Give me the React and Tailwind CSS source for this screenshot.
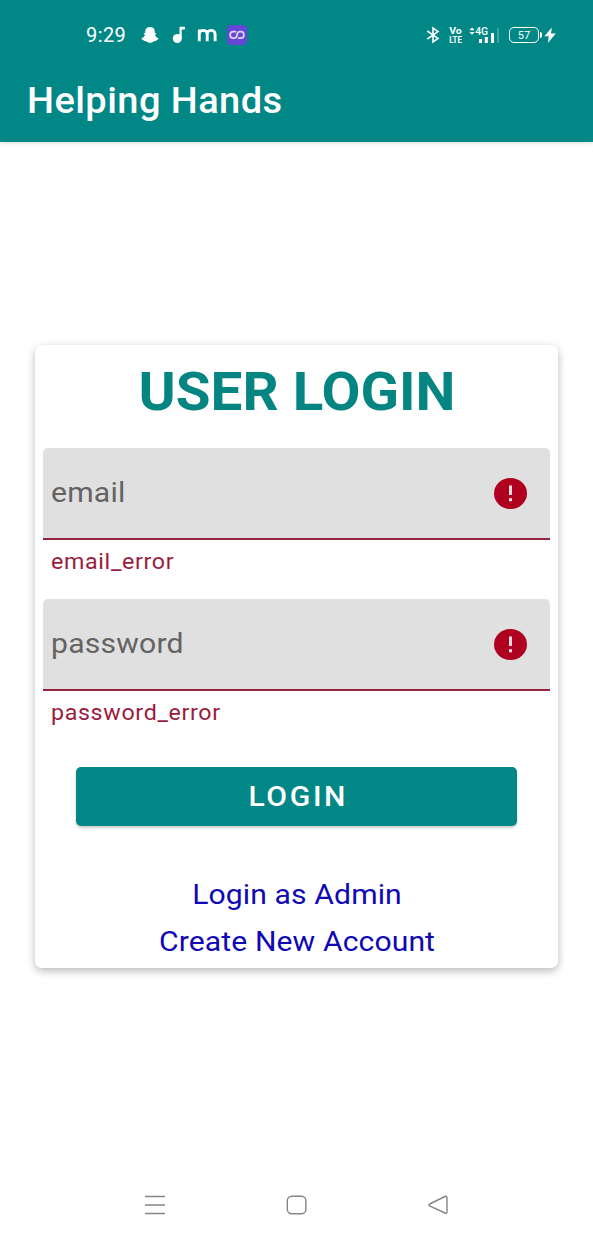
import React from "react";

function StatusIconsLeft() {
  return (
    <div className="flex items-center">
      <svg className="ml-[15px] h-[18px] w-[18px]" viewBox="0 0 18 18" fill="#fff">
        <path d="M9 1C6.100 1 4.200 2.800 4.200 5.200V7.200C3.400 7 2.900 7 2.800 7.500C2.700 8 3.300 8.500 4 8.800C3.500 10.400 2.200 11.800 .5 12.500C0 12.900 .9 13.700 2.500 13.900L2.900 15.100C4 15 5 15.100 6 15.700C7 16.400 7.800 16.900 9 16.900S11 16.400 12 15.700C13 15.100 14 15 15.100 15.100L15.500 13.900C17.100 13.700 18 12.900 17.500 12.500C15.800 11.800 14.500 10.400 14 8.800C14.700 8.500 15.300 8 15.200 7.500C15.100 7 14.600 7 13.800 7.200V5.200C13.800 2.800 11.900 1 9 1Z" />
      </svg>
      <svg className="ml-[13px] h-[18px] w-[14px]" viewBox="0 0 14 18" fill="#fff">
        <circle cx="5.300" cy="12.500" r="4.500" />
        <path d="M7.500 .8H12.900V3.500H9.700V13H7.500Z" />
      </svg>
      <svg className="ml-[11px] h-[18px] w-[20px]" viewBox="0 0 20 18" fill="none" stroke="#fff" strokeWidth="2.900">
        <path d="M2.300 15.300V3.500M2.300 8A3.960 3.900 0 0 1 10.200 8V15.300M10.200 8A3.960 3.900 0 0 1 18.100 8V15.300" />
      </svg>
      <svg className="ml-[10px] h-[20px] w-[20px]" viewBox="0 0 20 20">
        <rect width="20" height="20" rx="4.500" fill="#6447d5" />
        <path d="M8.500 6.700H6.300A3.200 3.200 0 0 0 6.300 13.100H7.500C9.500 13.100 9.700 11.300 10 10S10.600 6.700 12.500 6.700H13.700A3.200 3.200 0 0 1 13.700 13.100H11.500" fill="none" stroke="#e3d5ff" strokeWidth="1.700" strokeLinecap="round" />
      </svg>
    </div>
  );
}

function StatusIconsRight() {
  return (
    <div className="flex items-center">
      <svg className="h-[18px] w-[14px]" viewBox="0 0 14 18" fill="none" stroke="#fff" strokeWidth="1.600">
        <path d="M1.300 5L12 12.400L7 16V2L12 5.600L1.300 13" />
      </svg>
      <svg className="ml-[9px] h-[20px] w-[13px] overflow-visible" viewBox="0 0 13 20" fill="#fff" fontFamily="Roboto, sans-serif" fontWeight="700" fontSize="9.800">
        <text x=".2" y="9.200" textLength="12.600" lengthAdjust="spacingAndGlyphs">Vo</text>
        <text x=".2" y="17.600" textLength="12.600" lengthAdjust="spacingAndGlyphs">LTE</text>
      </svg>
      <svg className="ml-[7px] h-[20px] w-[30px]" viewBox="0 0 30 20" fill="#fff">
        <path d="M.3 5.300L3 2.500L5.700 5.300ZM.3 7L3 9.800L5.700 7Z" />
        <text x="6.200" y="10" fontSize="10.500" fontFamily="Roboto, sans-serif" fontWeight="500" textLength="13" lengthAdjust="spacingAndGlyphs">4G</text>
        <rect x="10" y="14" width="3" height="4" />
        <rect x="15.800" y="12" width="3" height="6" />
        <rect x="22" y="8" width="3" height="10" />
        <rect x="28.200" y="3" width="1.600" height="15" opacity=".3" />
      </svg>
      <div className="ml-[10px] flex h-[16px] w-[30px] items-center justify-center rounded-[5px] border-[1.5px] border-white text-[11px] leading-none">
        57
      </div>
      <div className="ml-px h-[6px] w-[2px] rounded-r bg-white" />
      <svg className="ml-[2px] h-[18px] w-[12px]" viewBox="0 0 12 18" fill="#fff">
        <path d="M7.800 1.500L.4 10.200H4.800L3.800 17L11.800 7.500H7Z" />
      </svg>
    </div>
  );
}

function Field({ label, error }) {
  return (
    <div className="h-[151px]">
      <div className="flex h-[92px] items-center justify-between rounded-t-[5px] border-b-2 border-[#97243f] bg-[#e0e0e0] pr-[23px] pl-[8px]">
        <span className="origin-left scale-x-[1.057] text-[28.5px] leading-none tracking-[0.2px] text-[#636363]">{label}</span>
        <svg className="h-[31px] w-[33px]" viewBox="0 0 33 31">
          <ellipse cx="16.500" cy="15.500" rx="16.500" ry="15.500" fill="#b00020" />
          <path d="M15 7.500H18V17H15ZM15 20.200H18V23.200H15Z" fill="#f3dde0" />
        </svg>
      </div>
      <p className="w-fit origin-left scale-x-[1.057] pt-[9px] pl-[7.5px] text-[22px] leading-[26px] tracking-[0.62px] text-[#9b1c3c]">{error}</p>
    </div>
  );
}

export default function App() {
  return (
    <div className="flex h-[1239px] w-[593px] flex-col overflow-hidden bg-white font-[Roboto,sans-serif]">
      <header className="h-[142px] shrink-0 bg-[#018786] text-white shadow-[0_1px_5px_rgba(0,0,0,0.15)]">
        <div className="flex h-[70px] items-center pl-[86px] pr-[37px]">
          <span className="w-[40px] text-[20px] leading-none tracking-[0.4px] whitespace-nowrap">9:29</span>
          <StatusIconsLeft />
          <div className="ml-auto">
            <StatusIconsRight />
          </div>
        </div>
        <h1 className="ml-[26.5px] w-fit origin-left scale-x-[1.057] text-[36px] leading-[62px] font-medium tracking-[0.4px] whitespace-nowrap">Helping Hands</h1>
      </header>

      <main className="flex flex-1 flex-col px-[35px] pt-[203px]">
        <section className="h-[623px] rounded-[7px] bg-white px-[8px] shadow-[0_3px_8px_rgba(0,0,0,0.28)]">
          <h2 className="h-[103px] scale-x-[1.057] pl-px text-center text-[53.5px] leading-[93px] font-bold whitespace-nowrap text-[#058582]">USER LOGIN</h2>
          <Field label="email" error="email_error" />
          <Field label="password" error="password_error" />
          <button className="mt-[17px] ml-[33px] block h-[59px] w-[441px] rounded-[5px] bg-[#018786] text-[28.5px] leading-[60px] font-medium text-white shadow-[0_2px_3px_rgba(0,0,0,0.2)]">
            <span className="inline-block scale-x-[1.057] pl-[3px] tracking-[2.5px]">LOGIN</span>
          </button>
          <div className="mt-[45px] flex scale-x-[1.057] flex-col items-center pl-px text-[28.5px] leading-[47px] tracking-[0.1px] whitespace-nowrap text-[#1008b4]">
            <a>Login as Admin</a>
            <a>Create New Account</a>
          </div>
        </section>
      </main>

      <nav className="flex h-[68px] shrink-0 items-center justify-between pr-[144px] pl-[144px]">
        <svg className="h-[20px] w-[22px]" viewBox="0 0 22 20" stroke="#858585" strokeWidth="1.400">
          <path d="M1 1.500H21M1 10H21M1 18.500H21" />
        </svg>
        <svg className="h-[20px] w-[22px]" viewBox="0 0 22 20" fill="none" stroke="#858585" strokeWidth="1.400">
          <rect x="1.300" y="1.200" width="18.600" height="17.600" rx="4.500" />
        </svg>
        <svg className="h-[20px] w-[22px]" viewBox="0 0 22 20" fill="none" stroke="#858585" strokeWidth="1.400" strokeLinejoin="round">
          <path d="M2.600 9L18 1.500Q20 .8 20 2.800V16.800Q20 18.800 18 18L2.600 10.800Q1.200 9.900 2.600 9Z" />
        </svg>
      </nav>
    </div>
  );
}
